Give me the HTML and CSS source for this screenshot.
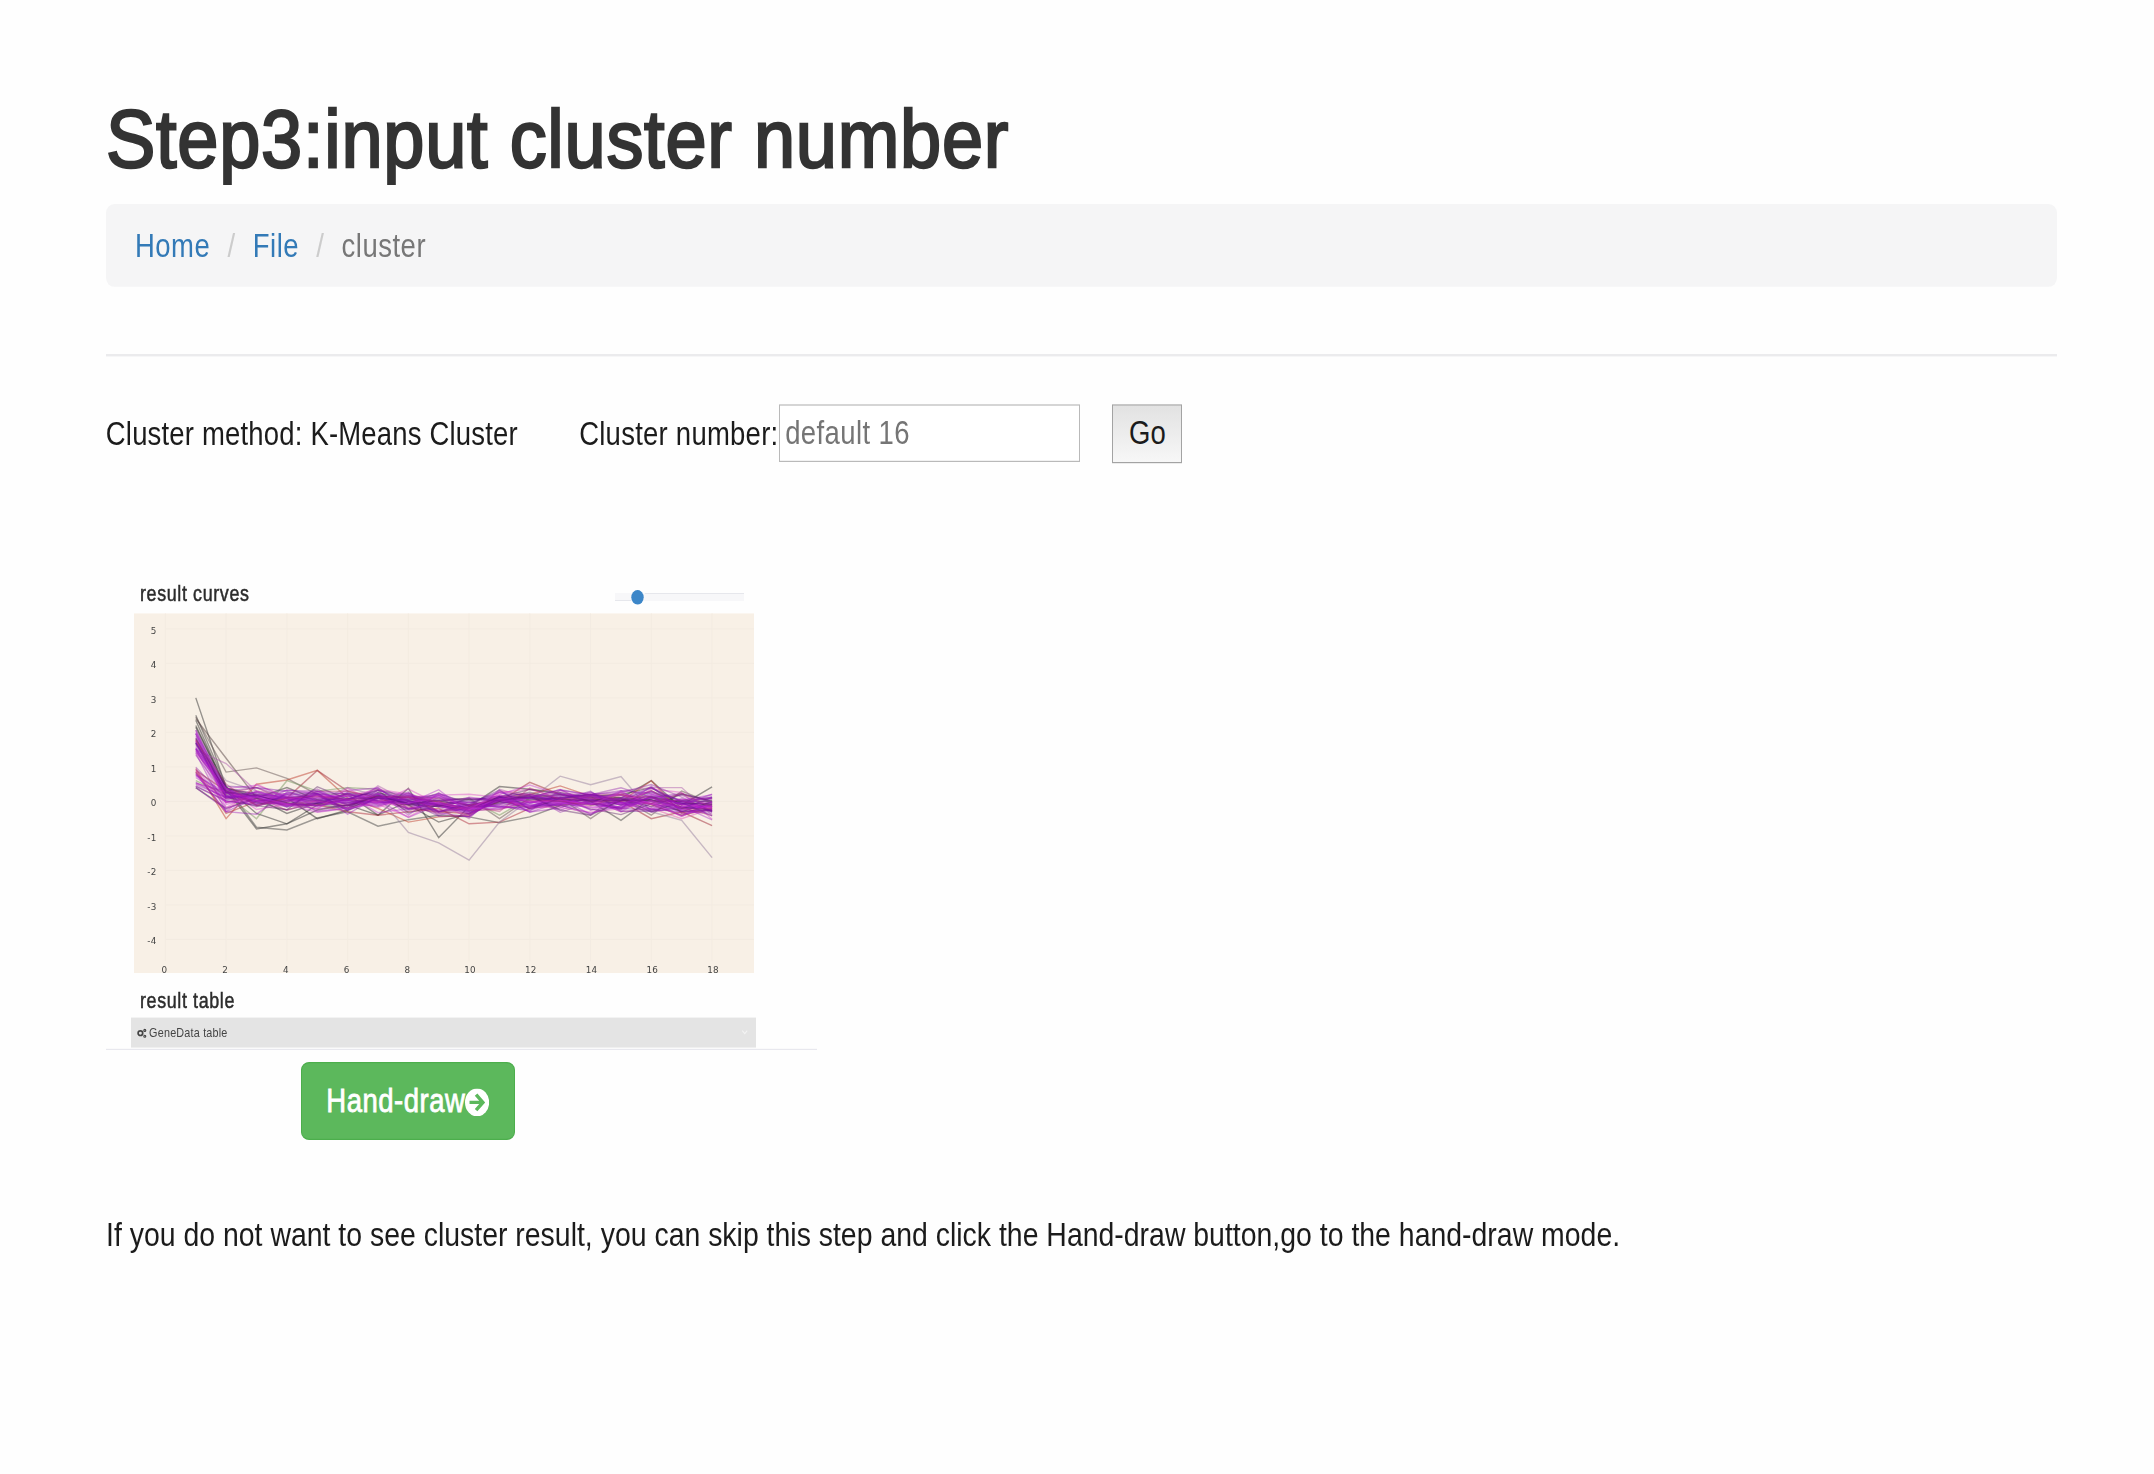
FILE: index.html
```html
<!DOCTYPE html>
<html lang="en">
<head>
<meta charset="utf-8">
<title>Step3:input cluster number</title>
<link rel="stylesheet" href="styles.css">
</head>
<body>
<main class="page">
  <h1 class="title">Step3:input cluster number</h1>
  <nav class="breadcrumb">
    <a class="crumb" href="#">Home</a><span class="sep">/</span><a class="crumb" href="#">File</a><span class="sep">/</span><span class="current">cluster</span>
  </nav>
  <hr class="rule">
  <form class="controls">
    <span class="method">Cluster method: K-Means Cluster</span>
    <label class="label" for="number">Cluster number:</label>
    <input class="number" id="number" placeholder="default 16">
    <button class="go" type="button">Go</button>
  </form>
  <section class="result">
    <header class="result-head">
      <h2 class="subtitle">result curves</h2>
      <svg class="slider" viewBox="0 0 130 18" preserveAspectRatio="none">
        <rect x="0" y="5" width="129" height="8" fill="#f7f7f9"/>
        <path d="M30 5.5H129M0 12.5H16" stroke="#e6e7ec"/>
        <ellipse cx="22.5" cy="9.3" rx="6.2" ry="7.3" fill="#3c86c8"/>
      </svg>
    </header>
    <svg class="chart" id="chart" viewBox="133 613 620 360" preserveAspectRatio="none"></svg>
    <h2 class="subtitle table-title">result table</h2>
    <div class="table-bar">
      <svg class="gears" viewBox="0 0 10 12" preserveAspectRatio="none">
        <circle cx="3.4" cy="6" r="2.3" fill="none" stroke="#444" stroke-width="1.7"/>
        <circle cx="7.8" cy="3.2" r="1" fill="none" stroke="#444" stroke-width="1.1"/>
        <circle cx="7.8" cy="9" r="1" fill="none" stroke="#444" stroke-width="1.1"/>
      </svg>
      <span class="bar-text">GeneData table</span>
      <svg class="chevron" viewBox="0 0 8 6"><path d="M1 1l3 3 3-3" fill="none" stroke="#f4f4f4" stroke-width="1.2"/></svg>
    </div>
  </section>
  <a class="draw" href="#">Hand-draw<svg class="arrow" viewBox="0 0 24 28" preserveAspectRatio="none">
      <ellipse cx="12" cy="14" rx="12" ry="14" fill="#fff"/>
      <path d="M4.5 14H17M11 6.2L17.8 14L11 21.8" fill="none" stroke="#5cb85c" stroke-width="3.4"/>
    </svg></a>
  <p class="note">If you do not want to see cluster result, you can skip this step and click the Hand-draw button,go to the hand-draw mode.</p>
</main>
<script src="chart.js"></script>
</body>
</html>
```
FILE: styles.css
```css
* { box-sizing: border-box; }
html, body { margin: 0; height: 100%; overflow: hidden; background: #fefefe; }
body { font: 33px/46px "Liberation Sans", Arial, sans-serif; color: #1b1b1b; }
/* Condensed type: the page is zoomed down, then stretched back vertically. */
.page {
  zoom: .833333;
  width: 2341px;
  margin-left: 127px;
  padding-top: 89px;
  transform: scaleY(1.2);
  transform-origin: 0 0;
  display: flex;
  flex-direction: column;
  align-items: flex-start;
  letter-spacing: .22px;
}
.title {
  margin: 0;
  height: 115px;
  font-size: 82px;
  line-height: 100px;
  font-weight: 400;
  letter-spacing: .8px;
  color: #333;
  -webkit-text-stroke: 2.4px #333;
  white-space: nowrap;
  transform: scaleX(1.083);
  transform-origin: 0 0;
}
.breadcrumb {
  width: 100%;
  height: 83px;
  padding: 2px 35px 0;
  border-radius: 10px / 9px;
  background: #f5f5f6;
  display: flex;
  align-items: center;
  letter-spacing: .6px;
}
.crumb { color: #337ab7; text-decoration: none; }
.sep { color: #ccc; width: 51px; text-align: center; }
.current { color: #777; }
.rule { width: 100%; height: 2px; margin: 67px 0 48px; border: 0; background: #ebebed; }
.controls { display: flex; height: 59px; margin: 0; white-space: nowrap; }
.method { width: 568px; line-height: 59px; }
.label { width: 240px; line-height: 59px; letter-spacing: .3px; }
.number {
  width: 361px;
  height: 58px;
  padding: 0 6px;
  border: 1.5px solid #b9b9b9;
  background: #fff;
  font: inherit;
  letter-spacing: .5px;
}
.number::placeholder { color: #757575; opacity: 1; }
.go {
  width: 84px;
  height: 58px;
  margin: 1px 0 0 39px;
  padding: 0;
  border: 2.4px solid #a3a3a3;
  background: linear-gradient(#e2e2e2, #f7f7f7);
  color: #1b1b1b;
  font: inherit;
}
.result {
  width: 854px;
  height: 472px;
  margin-top: 115px;
  padding: 0 0 0 30px;
  border-bottom: 1px solid #e8e8ee;
}
.result-head { display: flex; justify-content: space-between; width: 737px; height: 35px; padding-left: 11px; }
.subtitle { margin: 0; font-size: 21.5px; line-height: 33px; font-weight: 400; letter-spacing: .75px; color: #2c2c2c; -webkit-text-stroke: .5px #2c2c2c; }
.slider { width: 156px; height: 18px; margin-top: 10px; }
.chart { display: block; width: 744px; height: 360px; margin-left: 3.5px; }
.table-title { padding: 12px 0 0 11px; height: 45px; }
.table-bar {
  width: 750px;
  height: 30px;
  padding: 0 9px 0 7px;
  background: #e4e4e4;
  display: flex;
  align-items: center;
}
.gears { width: 12px; height: 12px; }
.bar-text { margin-left: 3px; font-size: 13px; line-height: 30px; color: #444; }
.chevron { width: 9px; height: 6px; margin-left: auto; }
.draw {
  width: 257px;
  height: 78px;
  margin: 12px 0 0 234px;
  padding-top: 2px;
  border: 1.5px solid #4cae4c;
  border-radius: 10px / 8px;
  background: #5cb85c;
  color: #fff;
  -webkit-text-stroke: .8px #fff;
  letter-spacing: .6px;
  text-decoration: none;
  display: flex;
  align-items: center;
  justify-content: center;
}
.arrow { width: 29px; height: 28px; }
.note { margin: 72px 0 0; white-space: nowrap; letter-spacing: 0; transform: scaleX(1.0345); transform-origin: 0 0; }
```
FILE: chart.js
```js
const NS = 'http://www.w3.org/2000/svg';
const chart = document.getElementById('chart');
const px = v => 164.4 + v * 30.37;
const py = v => 801.2 - v * 34.5;

function add(tag, attrs, text) {
  const el = document.createElementNS(NS, tag);
  for (const key in attrs) el.setAttribute(key, attrs[key]);
  if (text !== undefined) el.textContent = text;
  chart.appendChild(el);
}

add('rect', { x: 133, y: 613, width: 620, height: 360, fill: '#f8f0e6' });
for (let v = -4; v <= 5; v++) {
  add('path', { d: `M165 ${py(v)}H753`, stroke: '#f3ebe1' });
  add('text', { x: 155.5, y: py(v) + 5, 'text-anchor': 'end', 'font-size': 8.8, 'font-family': 'DejaVu Sans', fill: '#444' }, v);
}
for (let v = 0; v <= 18; v += 2) {
  add('path', { d: `M${px(v)} 613V961`, stroke: '#f3ebe1' });
  add('text', { x: px(v) + (v < 10 ? -1 : 1), y: 972.4, 'text-anchor': 'middle', 'font-size': 8.8, 'font-family': 'DejaVu Sans', fill: '#444' }, v);
}

function line(values, color, opacity) {
  const points = values.map((v, i) => `${px(1 + i).toFixed(1)},${py(v).toFixed(1)}`).join(' ');
  add('polyline', { points, fill: 'none', stroke: color, 'stroke-opacity': opacity, 'stroke-width': 1.4 });
}

let seed = 11;
const rand = () => (seed = (seed * 16807) % 2147483647) / 2147483647;
const mean = [0, .12, .05, .06, .06, .06, .08, -.04, -.07, -.18, -.04, 0, .05, -.04, 0, .04, -.08, -.15];
const colors = ['#9410b8', '#a31cc8', '#8a14a8', '#c42cd8', '#7010a0', '#9410b8', '#d838c8', '#4a1060', '#b02878', '#a31cc8'];

const outliers = [
  ['#333', [3, .4, -.35, -.65, -.25, -.1, -.4, .38, -1.05, -.15, .43, .35, .25, .12, -.1, .3, -.1, .42]],
  ['#444', [2.5, .45, -.75, -.83, -.48, -.3, -.72, -.53, -.4, -.45, -.62, -.45, -.12, 0, -.55, .1, 0, .1]],
  ['#333', [2.35, .35, -.8, -.65, -.1, -.2, .1, -.1, -.6, -.35, .1, .1, .2, .1, .1, .6, -.2, -.1]],
  ['#655', [2.45, .85, .97, .67, .2, -.1, .15, .1, 0, .1, -.5, .1, .1, -.5, .1, -.4, .3, -.05]],
  ['#333', [2.2, .4, .1, -.35, -.05, .2, -.4, 0, -.1, -.2, 0, .2, .1, .2, .1, -.3, 0, 0]],
  ['#333', [.4, -.2, .1, .4, .05, -.2, .25, .05, 0, -.1, .05, .1, 0, .15, .2, .4, -.1, -.05]],
  ['#222', [2.15, .38, .2, .1, -.5, -.25, .2, -.1, -.15, -.2, -.05, .05, .1, -.1, 0, .05, -.3, 0]],
  ['#544', [2.4, 1.25, .1, -.1, .05, .2, 0, -.1, 0, -.1, .05, .1, 0, .05, .1, 0, 0, -.1]],
  ['#c04030', [.95, -.5, .5, .62, .9, .1, -.2, -.6, -.45, -.4, .1, .2, .45, .15, 0, .6, -.35, -.1]],
  ['#a02838', [.9, .3, -.1, .1, .9, .3, .1, -.2, -.3, -.35, 0, .55, .2, .1, 0, -.5, -.3, -.7]],
  ['#b03040', [.85, -.35, 0, -.1, -.1, -.3, -.4, -.3, -.2, -.65, -.6, -.2, .1, 0, .2, -.1, -.4, -.2]],
  ['#789860', [.6, .2, -.5, .6, .3, .4, .35, .1, .1, .05, -.4, .1, .2, 0, .1, 0, .2, 0]],
  ['#97809f', [1.7, .6, .3, .1, 0, .4, .15, -.9, -1.2, -1.7, -.6, .05, .73, .48, .72, -.3, -.55, -1.63]],
  ['#b060b0', [1.5, 1.1, .3, .2, -.3, -.2, .45, 0, 0, -.5, .35, .1, -.1, -.4, .3, .4, .4, -.4]],
  ['#e060b8', [.8, -.3, .5, .1, -.2, .2, 0, -.2, -.1, -.4, .3, .2, .1, .1, -.3, -.2, -.5, -.2]]
];
outliers.forEach(([color, values]) => line(values, color, .5));

for (let n = 0; n < 46; n++) {
  const high = n % 3 !== 0;
  const first = high ? 1.3 + rand() * .8 : .4 + rand() * .6;
  const bias = (rand() - .5) * .15;
  line(mean.map((m, i) => {
    if (i === 0) return first;
    const spread = i === 1 ? .75 : .58;
    return m + bias + (rand() + rand() - 1) * spread / 1.4 + (i === 1 && high ? .12 : 0);
  }), colors[n % colors.length], .4);
}
```
